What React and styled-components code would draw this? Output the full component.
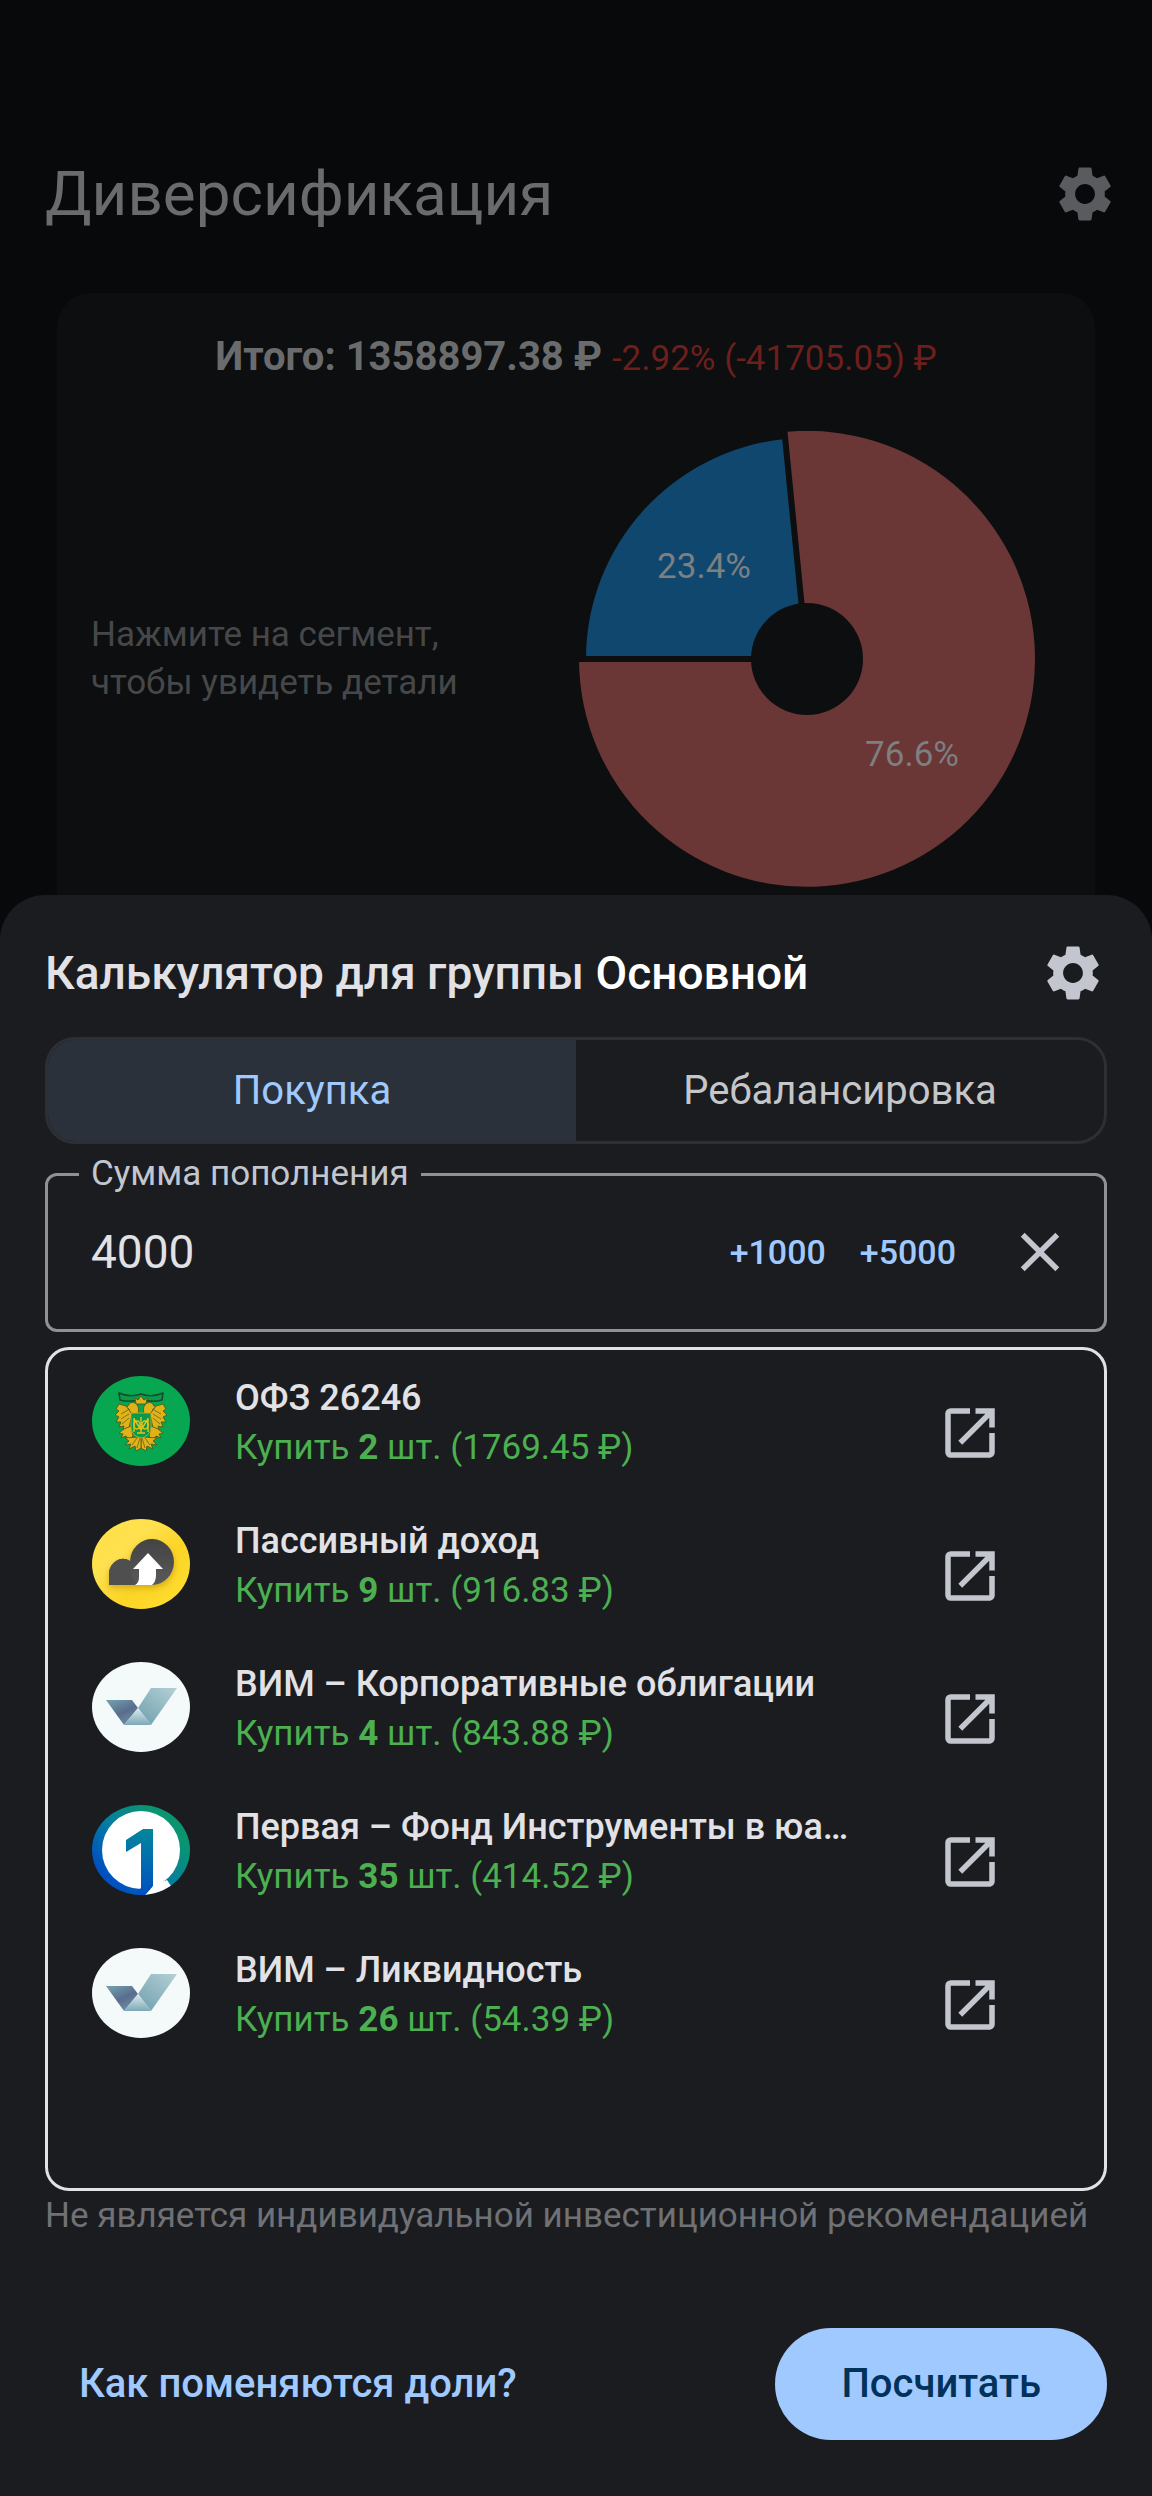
import React, { useState } from 'react';
import styled, { createGlobalStyle } from 'styled-components';
import { MdSettings, MdClose, MdOpenInNew } from 'react-icons/md';

const GlobalStyle = createGlobalStyle`
  * {
    box-sizing: border-box;
  }

  body {
    margin: 0;
    background: #08090b;
    font-family: Roboto, 'Noto Sans', sans-serif;
  }

  button, input {
    font-family: inherit;
    margin: 0;
  }
`;

const Screen = styled.div`
  min-height: 100vh;
  overflow: hidden;
`;

const Backdrop = styled.main`
  padding: 150px 57px 0;
`;

const PageHeader = styled.header`
  display: flex;
  align-items: center;
  justify-content: space-between;
  height: 88px;
  margin: 0 -34px 55px -12px;
`;

const PageTitle = styled.h1`
  margin: 0;
  color: #6a6b6d;
  font-size: 62px;
  line-height: 72px;
  font-weight: 400;
`;

const IconButton = styled.button`
  display: flex;
  align-items: center;
  justify-content: center;
  flex: none;
  width: ${({ $size }) => $size || 88}px;
  height: ${({ $size }) => $size || 88}px;
  padding: 0;
  border: 0;
  border-radius: 50%;
  background: none;
  color: ${({ $color }) => $color || '#c4c6cf'};
  font-size: 66px;
  cursor: pointer;
`;

const Card = styled.section`
  padding: 40px 34px 60px;
  border-radius: 34px;
  background: #0c0e0f;
`;

const Total = styled.p`
  margin: 0;
  color: #6a6b6d;
  font-size: 40px;
  line-height: 48px;
  font-weight: 700;
  text-align: center;
`;

const Loss = styled.span`
  color: #6d1f1c;
  font-size: 35px;
  font-weight: 400;
`;

const ChartRow = styled.div`
  display: flex;
  align-items: center;
  justify-content: space-between;
  margin-top: 48px;
  padding-right: 26px;
`;

const Hint = styled.p`
  margin: 0;
  color: #464749;
  font-size: 35px;
  line-height: 48px;
`;

const PieLabel = styled.text`
  fill: #7d7f80;
  font-size: 35px;
  text-anchor: middle;
`;

const Sheet = styled.section`
  position: fixed;
  right: 0;
  bottom: 0;
  left: 0;
  padding: 34px 45px 56px;
  border-radius: 45px 45px 0 0;
  background: #1a1c1f;
`;

const SheetHeader = styled.header`
  display: flex;
  align-items: center;
  justify-content: space-between;
  height: 88px;
  margin-right: -10px;
`;

const SheetTitle = styled.h2`
  margin: 0;
  color: #e2e2e6;
  font-size: 46px;
  line-height: 56px;
  font-weight: 500;
`;

const GroupName = styled.span`
  color: #fff;
`;

const Segments = styled.div`
  display: flex;
  height: 107px;
  margin-top: 20px;
  border: 3px solid #2c2f33;
  border-radius: 30px;
  overflow: hidden;
`;

const Segment = styled.button`
  flex: 1;
  padding: 0;
  border: 0;
  background: ${({ $active }) => ($active ? '#2b313b' : 'none')};
  color: ${({ $active }) => ($active ? '#a0c9ff' : '#c4c6c9')};
  font-size: 40px;
  line-height: 48px;
  cursor: pointer;
`;

const Field = styled.fieldset`
  display: flex;
  align-items: center;
  min-width: 0;
  height: 178px;
  margin: 10px 0 0;
  padding: 0 20px 20px 43px;
  border: 3px solid #8e9195;
  border-radius: 12px;
`;

const FieldLegend = styled.legend`
  margin-left: -12px;
  padding: 0 12px;
  color: #c4c6cf;
  font-size: 35px;
  line-height: 40px;
`;

const AmountInput = styled.input`
  flex: 1;
  min-width: 0;
  padding: 0;
  border: 0;
  outline: 0;
  background: none;
  color: #e2e2e6;
  font-size: 46px;
  line-height: 56px;
`;

const QuickAdds = styled.div`
  display: flex;
  gap: 34px;
  margin-right: 40px;
`;

const QuickAdd = styled.button`
  padding: 0;
  border: 0;
  background: none;
  color: #a0c9ff;
  font-size: 34px;
  line-height: 48px;
  font-weight: 500;
  cursor: pointer;
`;

const List = styled.ul`
  height: 844px;
  margin: 15px 0 0;
  padding: 11px 66px 0 44px;
  border: 3px solid #e2e2e4;
  border-radius: 24px;
  list-style: none;
`;

const Item = styled.li`
  display: flex;
  align-items: center;
  height: 143px;
`;

const ItemLogo = styled.svg`
  flex: none;
  align-self: flex-start;
  width: 98px;
  height: 90px;
  margin-top: 15px;
`;

const ItemText = styled.div`
  flex: 1;
  align-self: flex-start;
  min-width: 0;
  margin: 12px 34px 0 45px;
`;

const ItemName = styled.div`
  overflow: hidden;
  color: #e2e2e6;
  font-size: 36px;
  line-height: 50px;
  font-weight: 500;
  text-overflow: ellipsis;
  white-space: nowrap;
`;

const ItemAdvice = styled.div`
  color: #4caf50;
  font-size: 35px;
  line-height: 50px;
`;

const Disclaimer = styled.p`
  margin: 0;
  color: #6f7174;
  font-size: 35px;
  line-height: 50px;
`;

const Actions = styled.footer`
  display: flex;
  align-items: center;
  justify-content: space-between;
  margin-top: 87px;
`;

const TextButton = styled.button`
  height: 112px;
  padding: 0 34px;
  border: 0;
  background: none;
  color: #a0c9ff;
  font-size: 40px;
  line-height: 48px;
  font-weight: 500;
  cursor: pointer;
`;

const FilledButton = styled(TextButton)`
  padding: 0 66px;
  border-radius: 56px;
  background: #a0c9ff;
  color: #00325a;
`;

const PieChart = () => (
  <svg width="456" height="456" viewBox="-228 -228 456 456" role="img" aria-label="Доли групп">
    <path d="M-228 0A228 228 0 1 0 -23 -227L0 0Z" fill="#6a3636" />
    <path d="M-221 0A221 221 0 0 1 -22 -220L0 0Z" fill="#10476f" />
    <path d="M-232 0H0L-23 -232" fill="none" stroke="#0c0e0f" strokeWidth="6" />
    <circle r="56" fill="#0c0e0f" />
    <PieLabel x="-103" y="-81">23.4%</PieLabel>
    <PieLabel x="105" y="107">76.6%</PieLabel>
  </svg>
);

const BondLogo = () => (
  <ItemLogo viewBox="0 0 98 90" aria-hidden="true">
    <ellipse cx="49" cy="45" rx="49" ry="45" fill="#07a651" />
    <g fill="#e0b21a" stroke="#4d5416" strokeWidth="0.8" strokeLinejoin="round">
      <path d="M27 17Q38 22 49 18Q60 22 71 17L70 24Q60 27 49 23Q38 27 28 24Z" fill="#0b9a4b" stroke="#174a27" strokeWidth="1.6" />
      <path d="M44 28L43 22L46 24L49 20L52 24L55 22L54 28Z" />
      {[1, -1].map((side) => (
        <g key={side} transform={`translate(49 0) scale(${side} 1)`}>
          <path d="M3 38Q1 30 6 27Q11 25 13 30L16 31L12 33Q11 38 9 40Z" />
          <path d="M9 38L15 30L22 28L25 33L22 35L26 39L22 41L25 46L20 46L22 51L17 50L18 54L12 52Z" />
          <path d="M13 34L20 38M12 38L20 43M12 42L19 48" fill="none" stroke="#6c6115" />
          <path d="M10 50L17 53L22 57L18 58L20 62L15 60L12 64L8 60Z" />
          <path d="M3 61L16 62L12 65L16 69L10 68L12 73L6 70L5 75L0 72V61Z" />
          <path d="M4 62L9 69M1 62L4 72" fill="none" stroke="#6c6115" />
        </g>
      ))}
      <path d="M39 37H59V52Q58 60 49 62Q40 60 39 52Z" fill="#08994b" stroke="#d6ad1c" />
    </g>
    <g fill="none" stroke="#e8c21e" strokeWidth="1.4">
      <path d="M42 42V56M56 42V56M42 43L49 54L56 43M49 41V57M45 57H53" />
      <ellipse cx="45" cy="49" rx="3" ry="4" />
      <ellipse cx="53" cy="49" rx="3" ry="4" />
    </g>
  </ItemLogo>
);

const CloudLogo = () => (
  <ItemLogo viewBox="0 0 98 90" aria-hidden="true">
    <defs>
      <linearGradient id="cloudBg" x1="0" y1="0" x2="1" y2="1">
        <stop offset="0" stopColor="#ffe14a" />
        <stop offset="0.35" stopColor="#ffe04e" />
        <stop offset="0.6" stopColor="#fcd526" />
        <stop offset="1" stopColor="#ffdf30" />
      </linearGradient>
      <linearGradient id="cloudBig" x1="0" y1="0" x2="0" y2="1">
        <stop offset="0" stopColor="#434343" />
        <stop offset="1" stopColor="#5a5a59" />
      </linearGradient>
      <filter id="cloudShadow" x="-20%" y="-20%" width="140%" height="150%">
        <feDropShadow dx="0" dy="3" stdDeviation="3" floodColor="#a87c00" floodOpacity="0.5" />
      </filter>
    </defs>
    <ellipse cx="49" cy="45" rx="49" ry="45" fill="url(#cloudBg)" />
    <g filter="url(#cloudShadow)">
      <path d="M17 66V55A14 15 0 0 1 38 42A22 23 0 1 1 60 66Z" fill="url(#cloudBig)" />
      <path d="M17 66V55A14 15 0 0 1 38 42Q37 58 47 66Z" fill="#505050" />
    </g>
    <path d="M56 34L71 50H64V56Q64 63 60 66H43Q47 64 47 58V50H41Z" fill="#fff" />
  </ItemLogo>
);

const VimLogo = () => (
  <ItemLogo viewBox="0 0 98 90" aria-hidden="true">
    <defs>
      <linearGradient id="vimLeft" x1="0.2" y1="0" x2="0.8" y2="1">
        <stop offset="0" stopColor="#719cab" />
        <stop offset="0.5" stopColor="#596d8d" />
        <stop offset="1" stopColor="#6f93a6" />
      </linearGradient>
      <linearGradient id="vimRight" x1="1" y1="0" x2="0.2" y2="1">
        <stop offset="0" stopColor="#b5d0d6" />
        <stop offset="1" stopColor="#74a3b1" />
      </linearGradient>
      <linearGradient id="vimMiddle" x1="0" y1="0" x2="0" y2="1">
        <stop offset="0" stopColor="#dfeaee" />
        <stop offset="1" stopColor="#7ca9b7" />
      </linearGradient>
    </defs>
    <ellipse cx="49" cy="45" rx="49" ry="45" fill="#f4f9fa" />
    <path d="M14 38H40L46 46L32 63Z" fill="url(#vimLeft)" />
    <path d="M59 26H85L59 63L46 46Z" fill="url(#vimRight)" />
    <path d="M46 46L59 63H32Z" fill="url(#vimMiddle)" />
  </ItemLogo>
);

const FirstLogo = () => (
  <ItemLogo viewBox="0 0 98 90" aria-hidden="true">
    <defs>
      <linearGradient id="firstRing" gradientUnits="userSpaceOnUse" x1="22" y1="78" x2="78" y2="22">
        <stop offset="0" stopColor="#0050c0" />
        <stop offset="0.5" stopColor="#047f9f" />
        <stop offset="1" stopColor="#0a9570" />
      </linearGradient>
      <linearGradient id="firstStem" gradientUnits="userSpaceOnUse" x1="50" y1="88" x2="56" y2="24">
        <stop offset="0" stopColor="#0050c0" />
        <stop offset="1" stopColor="#04879b" />
      </linearGradient>
      <clipPath id="firstClip">
        <ellipse cx="49" cy="45" rx="49" ry="45" />
      </clipPath>
    </defs>
    <g clipPath="url(#firstClip)">
      <rect width="98" height="90" fill="url(#firstRing)" />
      <circle cx="49" cy="45" r="39" fill="#fff" />
      <path d="M61 81L53 90H86L79 81L75 75Z" fill="#fff" />
      <path d="M34 35L51 24H61V81L53 90H40L49 83V38L34 47Z" fill="url(#firstStem)" />
    </g>
  </ItemLogo>
);

const items = [
  { name: 'ОФЗ 26246', count: 2, sum: '1769.45', Logo: BondLogo },
  { name: 'Пассивный доход', count: 9, sum: '916.83', Logo: CloudLogo },
  { name: 'ВИМ – Корпоративные облигации', count: 4, sum: '843.88', Logo: VimLogo },
  { name: 'Первая – Фонд Инструменты в юа…', count: 35, sum: '414.52', Logo: FirstLogo },
  { name: 'ВИМ – Ликвидность', count: 26, sum: '54.39', Logo: VimLogo },
];

export default () => {
  const [tab, setTab] = useState('buy');
  const [amount, setAmount] = useState('4000');
  const add = (value) => setAmount(String(Number(amount) + value));

  return (
    <Screen>
      <GlobalStyle />
      <Backdrop>
        <PageHeader>
          <PageTitle>Диверсификация</PageTitle>
          <IconButton $color="#5a5b5e" aria-label="Настройки"><MdSettings /></IconButton>
        </PageHeader>
        <Card>
          <Total>
            Итого: 1358897.38 ₽ <Loss>-2.92% (-41705.05) ₽</Loss>
          </Total>
          <ChartRow>
            <Hint>
              Нажмите на сегмент,
              <br />
              чтобы увидеть детали
            </Hint>
            <PieChart />
          </ChartRow>
        </Card>
      </Backdrop>

      <Sheet>
        <SheetHeader>
          <SheetTitle>
            Калькулятор для группы <GroupName>Основной</GroupName>
          </SheetTitle>
          <IconButton aria-label="Настройки калькулятора"><MdSettings /></IconButton>
        </SheetHeader>
        <Segments>
          <Segment $active={tab === 'buy'} onClick={() => setTab('buy')}>Покупка</Segment>
          <Segment $active={tab === 'rebalance'} onClick={() => setTab('rebalance')}>
            Ребалансировка
          </Segment>
        </Segments>
        <Field>
          <FieldLegend><label htmlFor="amount">Сумма пополнения</label></FieldLegend>
          <AmountInput
            id="amount"
            inputMode="numeric"
            value={amount}
            onChange={(e) => setAmount(e.target.value)}
          />
          <QuickAdds>
            <QuickAdd onClick={() => add(1000)}>+1000</QuickAdd>
            <QuickAdd onClick={() => add(5000)}>+5000</QuickAdd>
          </QuickAdds>
          <IconButton aria-label="Очистить" onClick={() => setAmount('')}><MdClose /></IconButton>
        </Field>
        <List>
          {items.map(({ name, count, sum, Logo }) => (
            <Item key={name}>
              <Logo />
              <ItemText>
                <ItemName>{name}</ItemName>
                <ItemAdvice>
                  Купить <b>{count}</b> шт. ({sum} ₽)
                </ItemAdvice>
              </ItemText>
              <IconButton $size={136} aria-label={`Открыть ${name}`}><MdOpenInNew /></IconButton>
            </Item>
          ))}
        </List>
        <Disclaimer>Не является индивидуальной инвестиционной рекомендацией</Disclaimer>
        <Actions>
          <TextButton>Как поменяются доли?</TextButton>
          <FilledButton>Посчитать</FilledButton>
        </Actions>
      </Sheet>
    </Screen>
  );
};
